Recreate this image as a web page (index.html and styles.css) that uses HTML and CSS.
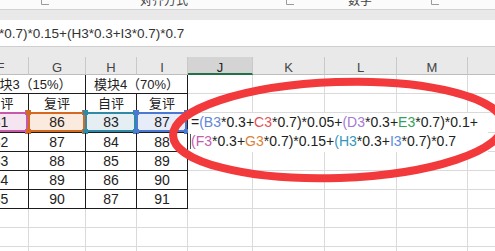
FILE: index.html
```html
<!DOCTYPE html>
<html>
<head>
<meta charset="utf-8">
<link rel="stylesheet" href="styles.css">
</head>
<body>
<div class="ribbon">
  <span class="launch l1"><svg width="10" height="6" viewBox="0 0 10 6"><path d="M1.5 0 V4.5 H9" stroke="#9a9a9a" fill="none"/></svg></span>
  <span class="glabel g1">对齐方式</span>
  <span class="launch l2"><svg width="10" height="6" viewBox="0 0 10 6"><path d="M1.5 0 V4.5 H9" stroke="#9a9a9a" fill="none"/></svg></span>
  <span class="glabel g2">数字</span>
  <span class="launch l3"><svg width="10" height="6" viewBox="0 0 10 6"><path d="M1.5 0 V4.5 H9" stroke="#9a9a9a" fill="none"/></svg></span>
</div>
<div class="strip"></div>
<div class="fbar"><span class="ftext">*0.7)*0.15+(H3*0.3+I3*0.7)*0.7</span></div>
<div class="gap"></div>
<div class="sheet">
  <div class="hd">F</div><div class="hd">G</div><div class="hd">H</div><div class="hd">I</div><div class="hd sel">J</div><div class="hd">K</div><div class="hd">L</div><div class="hd">M</div><div class="hd"></div>

  <div class="c t cj span2">模块3（15%）</div><div class="c t cj span2">模块4（70%）</div><div class="c"></div><div class="c"></div><div class="c"></div><div class="c"></div><div class="c"></div>

  <div class="c t cj">自评</div><div class="c t cj">复评</div><div class="c t cj">自评</div><div class="c t cj">复评</div><div class="c"></div><div class="c"></div><div class="c"></div><div class="c"></div><div class="c"></div>

  <div class="c t rf rf-f">81<span class="ref"><i class="h tl"></i><i class="h tr"></i><i class="h bl"></i><i class="h br"></i></span></div>
  <div class="c t rf rf-g">86<span class="ref"><i class="h tl"></i><i class="h tr"></i><i class="h bl"></i><i class="h br"></i></span></div>
  <div class="c t rf rf-h">83<span class="ref"><i class="h tl"></i><i class="h tr"></i><i class="h bl"></i><i class="h br"></i></span></div>
  <div class="c t rf rf-i">87<span class="ref"><i class="h tl"></i><i class="h tr"></i><i class="h bl"></i><i class="h br"></i></span></div>
  <div class="c"></div><div class="c"></div><div class="c"></div><div class="c"></div><div class="c"></div>

  <div class="c t">82</div><div class="c t">87</div><div class="c t">84</div><div class="c t">88</div><div class="c"></div><div class="c"></div><div class="c"></div><div class="c"></div><div class="c"></div>
  <div class="c t">83</div><div class="c t">88</div><div class="c t">85</div><div class="c t">89</div><div class="c"></div><div class="c"></div><div class="c"></div><div class="c"></div><div class="c"></div>
  <div class="c t">84</div><div class="c t">89</div><div class="c t">86</div><div class="c t">90</div><div class="c"></div><div class="c"></div><div class="c"></div><div class="c"></div><div class="c"></div>
  <div class="c t">85</div><div class="c t">90</div><div class="c t">87</div><div class="c t">91</div><div class="c"></div><div class="c"></div><div class="c"></div><div class="c"></div><div class="c"></div>

  <div class="c"></div><div class="c"></div><div class="c"></div><div class="c"></div><div class="c"></div><div class="c"></div><div class="c"></div><div class="c"></div><div class="c"></div>
  <div class="c"></div><div class="c"></div><div class="c"></div><div class="c"></div><div class="c"></div><div class="c"></div><div class="c"></div><div class="c"></div><div class="c"></div>
  <div class="c"></div><div class="c"></div><div class="c"></div><div class="c"></div><div class="c"></div><div class="c"></div><div class="c"></div><div class="c"></div><div class="c"></div>
</div>

<div class="edit">
  <div class="eline">=<span class="kb">(B3</span>*0.3+<span class="kc">C3</span>*0.7)*0.05+<span class="kd">(D3</span>*0.3+<span class="ke">E3</span>*0.7)*0.1+</div>
  <div class="eline"><span class="caret"></span><span class="kf">(F3</span>*0.3+<span class="kg">G3</span>*0.7)*0.15+<span class="kh">(H3</span>*0.3+<span class="ki">I3</span>*0.7)*0.7</div>
</div>

<svg class="oval" width="495" height="251" viewBox="0 0 495 251">
  <ellipse cx="338" cy="130" rx="165" ry="48" fill="none" stroke="#f23a3c" stroke-width="8" transform="rotate(-2 338 130)"/>
</svg>
</body>
</html>
```

FILE: styles.css
```css
html, body {
  margin: 0;
  padding: 0;
}
body {
  width: 495px;
  height: 251px;
  overflow: hidden;
  position: relative;
  background: #ffffff;
  font-family: "Liberation Sans", "Noto Sans CJK SC", sans-serif;
  color: #222;
}

.ribbon {
  height: 9px;
  background: #fbfbfb;
  display: flex;
  align-items: flex-start;
  overflow: hidden;
}
.glabel {
  font-family: "Noto Sans CJK SC", sans-serif;
  font-size: 12px;
  line-height: 12px;
  margin-top: -6px;
  color: #444;
  white-space: nowrap;
}
.launch {
  display: block;
  width: 10px;
  height: 6px;
}
.launch svg { display: block; }
.l1 { margin-left: 40px; }
.g1 { margin-left: 90px; }
.l2 { margin-left: 97px; }
.g2 { margin-left: 53px; }
.l3 { margin-left: 58px; }

.strip {
  height: 10px;
  border-top: 1px solid #d2d2d2;
  background: #e9e9e9;
}
.fbar {
  height: 26px;
  border-bottom: 1px solid #cfcfcf;
  background: #ffffff;
  overflow: hidden;
}
.ftext {
  display: block;
  margin-left: -1px;
  padding-top: 5px;
  font-size: 13.5px;
  line-height: 17px;
  color: #333;
  white-space: nowrap;
}
.gap {
  height: 10px;
  background: #e9e9e9;
}

.sheet {
  display: grid;
  grid-template-columns: 56px 57px 51px 51px 65px 72px 72px 71px 60px;
  grid-template-rows: 18px 19px 19px 20px 19px 19px 19px 19px 19px 19px 19px;
  margin-left: -27px;
}
.hd {
  box-sizing: border-box;
  background: #e9e9e9;
  border-right: 1px solid #c9c9c9;
  border-bottom: 1px solid #bdbdbd;
  text-align: center;
  font-size: 13px;
  line-height: 15px;
  padding-top: 3px;
  color: #444;
}
.hd.sel {
  background: #d4d4d4;
  border-bottom: 2px solid #217346;
  color: #222;
}
.c {
  box-sizing: border-box;
  border-right: 1px solid #dadada;
  border-bottom: 1px solid #dadada;
  text-align: center;
  font-size: 14px;
  line-height: 19px;
  white-space: nowrap;
  color: #222;
  position: relative;
}
.c.t {
  border-right-color: #1c1c1c;
  border-bottom-color: #1c1c1c;
}
.c.cj {
  font-size: 13px;
  color: #222;
}
.span2 { grid-column: span 2; }

.ref {
  position: absolute;
  top: -1px;
  left: -1px;
  right: 0;
  bottom: 0;
  border: 2px solid var(--rc);
  pointer-events: none;
}
.h {
  position: absolute;
  width: 5px;
  height: 5px;
  background: var(--rc);
}
.h.tl { top: -4px; left: -4px; }
.h.tr { top: -4px; right: -4px; }
.h.bl { bottom: -4px; left: -4px; }
.h.br { bottom: -4px; right: -4px; }

.rf-f { --rc: #c65aa8; background: #f5e5f0; }
.rf-g { --rc: #d4691f; background: #fbeade; }
.rf-h { --rc: #2f8aa6; background: #e5eef2; }
.rf-i { --rc: #4a78d2; background: #e6ecf8; }

.edit {
  position: absolute;
  left: 188px;
  top: 113px;
  width: 300px;
  height: 39px;
  background: #ffffff;
  box-sizing: border-box;
  padding-left: 3px;
  font-size: 14px;
  line-height: 19px;
  color: #222;
  white-space: nowrap;
}
.eline { height: 19px; }
.caret {
  display: inline-block;
  width: 0;
  height: 15px;
  border-left: 1px solid #555;
  vertical-align: -3px;
  margin-left: -1px;
}
.kb { color: #5f86d8; }
.kc { color: #e0535a; }
.kd { color: #a47ad6; }
.ke { color: #34a25a; }
.kf { color: #c45cae; }
.kg { color: #d7833a; }
.kh { color: #3596bd; }
.ki { color: #5d8ae2; }

.oval {
  position: absolute;
  left: 0;
  top: 0;
  pointer-events: none;
}
```
